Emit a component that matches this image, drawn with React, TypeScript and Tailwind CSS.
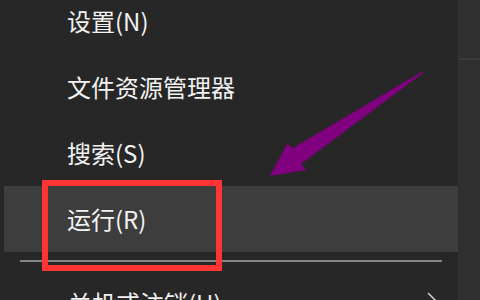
import React from 'react';

const items = ['设置(N)', '文件资源管理器', '搜索(S)', '运行(R)'];

export default function App() {
  return (
    <div
      className="relative w-[480px] h-[300px] overflow-hidden bg-[#272727] flex text-[#f2f2f2]"
      style={{ fontFamily: '"Noto Sans CJK SC", "Noto Sans", sans-serif' }}
    >
      <div className="w-[458px] shrink-0 flex flex-col -mt-[12px]">
        {items.map((label, i) => (
          <div
            key={label}
            className={
              i === 3
                ? 'shrink-0 ml-[4px] h-[66px] pl-[63px] flex items-center text-[24px] leading-none bg-[#3d3d3d]'
                : 'shrink-0 ml-[4px] h-[66px] pl-[63px] flex items-center text-[24px] leading-none'
            }
          >
            {label}
          </div>
        ))}
        <div className="shrink-0 py-[8px] pl-[20px] pr-[16px]">
          <div className="h-[2px] bg-[#858585]" />
        </div>
        <div className="shrink-0 ml-[4px] h-[66px] pl-[64px] pr-[18px] flex items-center justify-between text-[24px] leading-none">
          <span>关机或注销(U)</span>
          <svg width="14" height="24" viewBox="0 0 14 24" className="text-[#cfcfcf]">
            <path d="M2 2 L12 12 L2 22" fill="none" stroke="currentColor" strokeWidth="1.5" />
          </svg>
        </div>
      </div>
      <div className="flex-1 bg-[#2f2f2f] flex flex-col">
        <div className="h-[58px]" />
        <div className="h-[2px] bg-[#3a3a3a]" />
      </div>

      <div className="absolute left-[42px] top-[180px] w-[180px] h-[91px] border-[6px] border-[#ff3535]" />

      <svg className="absolute left-0 top-0" width="480" height="300" viewBox="0 0 480 300">
        <polygon
          points="423,71 293,148 287,144 270,176 306,170 301,164 423,73"
          fill="#800080"
        />
      </svg>
    </div>
  );
}
